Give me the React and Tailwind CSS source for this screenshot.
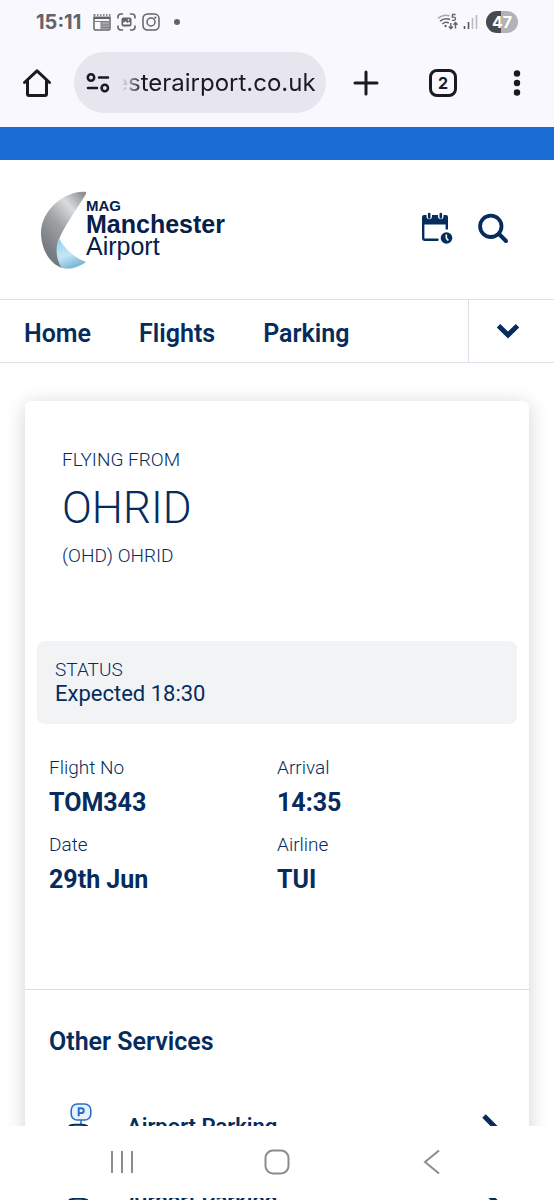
import { useLayoutEffect, useRef } from "react";

const NAV_LINKS = ["Home", "Flights", "Parking"];

const DETAILS = [
  { label: "Flight No", value: "TOM343" },
  { label: "Arrival", value: "14:35" },
  { label: "Date", value: "29th Jun" },
  { label: "Airline", value: "TUI" },
];

function NewsIcon() {
  return (
    <svg width="18" height="17" viewBox="0 0 18 17" fill="none" aria-hidden="true">
      <path d="M1 2.5V14.5Q1 16 2.5 16H15.5Q17 16 17 14.5V2.5" stroke="#636368" strokeWidth="1.5" />
      <path d="M0.5 1H2.5M4 1H5.5M7 1H8.5M10 1H11.5M13 1H14.500M16 1H17.500" stroke="#636368" strokeWidth="1.5" />
      <path d="M1 3.800H17" stroke="#636368" strokeWidth="2.500" />
      <path d="M8 8H16V15H8Z" fill="#a4a4a9" />
      <path d="M2 7.500H16M9 11H16M9 13.500H16M8 8V16" stroke="#7c7c82" strokeWidth="1" />
    </svg>
  );
}

function CaptureIcon() {
  return (
    <svg width="19" height="18" viewBox="0 0 19 18" fill="none" aria-hidden="true">
      <path
        d="M1 5V4Q1 1 4 1H5.500M13.500 1H15Q18 1 18 4V5M18 13V14Q18 17 15 17H13.500M5.500 17H4Q1 17 1 14V13"
        stroke="#636368"
        strokeWidth="1.600"
        strokeLinecap="round"
      />
      <rect x="4.500" y="4.500" width="10" height="9" rx="2" fill="#636368" />
      <path d="M6 11.500V10L8.500 8.300L10.500 10L12 8.800L13 9.500V11.500Z" fill="#f9f8fe" />
      <circle cx="11.500" cy="6.800" r="0.900" fill="#f9f8fe" />
    </svg>
  );
}

function CameraIcon() {
  return (
    <svg width="18" height="18" viewBox="0 0 18 18" fill="none" aria-hidden="true">
      <rect x="1" y="1" width="16" height="16" rx="4.500" stroke="#636368" strokeWidth="1.500" />
      <circle cx="9" cy="9" r="4" stroke="#636368" strokeWidth="1.500" />
      <circle cx="13.300" cy="4.700" r="1.100" fill="#636368" />
    </svg>
  );
}

function WifiIcon() {
  return (
    <svg width="22" height="18" viewBox="0 0 22 18" fill="none" aria-hidden="true">
      <path d="M1 5.500Q6 0.800 12.500 2.800" stroke="#a9a8ae" strokeWidth="1.500" />
      <path d="M3 8.300Q7.500 4.200 13 6.500" stroke="#636368" strokeWidth="1.500" />
      <path d="M5.300 11Q8.500 8.300 11.800 10" stroke="#636368" strokeWidth="1.500" />
      <circle cx="8.500" cy="13" r="1.200" fill="#636368" />
      <path d="M18.500 1.500H15.500L15.300 4.200Q18.500 3.600 18.500 5.700Q18.500 8 15 7.300" stroke="#636368" strokeWidth="1.300" />
      <path d="M13.800 10V15.500M11.800 13.500L13.800 15.700L15.800 13.500M18.500 15.500V10M16.500 11.800L18.500 9.600L20.500 11.800" stroke="#636368" strokeWidth="1.400" />
    </svg>
  );
}

function SignalIcon() {
  return (
    <svg width="15" height="16" viewBox="0 0 15 16" aria-hidden="true">
      <path d="M1.500 12V15M5.500 8V15" stroke="#57565b" strokeWidth="1.600" />
      <path d="M9.500 4V15M13.500 1V15" stroke="#bbbac1" strokeWidth="1.600" />
    </svg>
  );
}

function StatusBar() {
  return (
    <div className="flex h-11 items-center pr-9 pl-9 text-[#636368]">
      <span className="w-[49px] font-[Inter,sans-serif] text-xl leading-6 font-bold">15:11</span>
      <div className="ml-2 flex items-center gap-1.5">
        <NewsIcon />
        <CaptureIcon />
        <CameraIcon />
      </div>
      <span className="ml-3.5 size-1.5 rounded-full bg-[#636368]" />
      <div className="ml-auto flex items-center gap-1">
        <WifiIcon />
        <SignalIcon />
        <span className="ml-1 flex h-[22px] w-8 items-center justify-center rounded-full bg-linear-to-r from-[#4a494e] from-47% to-[#b3b2b8] to-47% font-[Inter,sans-serif] text-base leading-5 font-bold text-white">
          47
        </span>
      </div>
    </div>
  );
}

function BrowserBar() {
  const field = useRef(null);
  useLayoutEffect(() => {
    field.current.scrollLeft = field.current.scrollWidth;
  }, []);
  return (
    <div className="flex items-center pt-2 pr-[33px] pb-3.5 pl-[22px] text-[#1a1a22]">
      <button type="button" aria-label="Home page" className="shrink-0">
        <svg width="30" height="30" viewBox="0 0 30 30" fill="none" stroke="currentColor" strokeWidth="3" strokeLinecap="round" strokeLinejoin="round">
          <path d="M2.500 14.500L15 2.800L27.500 14.500" />
          <path d="M5.500 12.500V26Q5.500 27.500 7 27.500H23Q24.500 27.500 24.500 26V12.500" />
        </svg>
      </button>
      <div className="ml-[22px] flex h-[61px] min-w-0 flex-1 items-center gap-3 rounded-full bg-[#e7e5ee] pr-2.5 pl-3">
        <button type="button" aria-label="Site information" className="shrink-0">
          <svg width="24" height="20" viewBox="0 0 24 20" fill="none" stroke="currentColor" strokeWidth="2.500" strokeLinecap="round">
            <circle cx="5" cy="4.500" r="3.200" />
            <path d="M13 4.500H22M2 15H11" />
            <circle cx="18.800" cy="15" r="3.200" />
          </svg>
        </button>
        <input
          ref={field}
          type="text"
          readOnly
          aria-label="Address"
          defaultValue="esterairport.co.uk"
          className="min-w-0 flex-1 bg-transparent [mask-image:linear-gradient(to_right,transparent,black_20px)] font-[Inter,sans-serif] text-2xl leading-8 outline-none"
        />
      </div>
      <div className="ml-[27px] flex shrink-0 items-center">
        <button type="button" aria-label="New tab">
          <svg width="26" height="26" viewBox="0 0 26 26" fill="none" stroke="currentColor" strokeWidth="3" strokeLinecap="round">
            <path d="M13 2V24M2 13H24" />
          </svg>
        </button>
        <button
          type="button"
          aria-label="Open tabs"
          className="ml-[50px] flex size-7 items-center justify-center rounded-lg border-3 border-current font-[Inter,sans-serif] text-base leading-5 font-bold"
        >
          2
        </button>
        <button type="button" aria-label="More options" className="ml-14">
          <svg width="8" height="26" viewBox="0 0 8 26" fill="currentColor">
            <circle cx="4" cy="3.500" r="3.200" />
            <circle cx="4" cy="13" r="3.200" />
            <circle cx="4" cy="22.500" r="3.200" />
          </svg>
        </button>
      </div>
    </div>
  );
}

function Logo() {
  return (
    <a href="#home" className="flex items-start text-[#06204a]">
      <svg width="46" height="78" viewBox="0 0 46 78" aria-hidden="true">
        <defs>
          <linearGradient id="silver" x1="0.900" y1="0" x2="0.300" y2="0.900">
            <stop offset="0" stopColor="#8d9194" />
            <stop offset="0.280" stopColor="#d9dcde" />
            <stop offset="0.600" stopColor="#9da0a3" />
            <stop offset="1" stopColor="#74797d" />
          </linearGradient>
          <linearGradient id="sky" x1="0" y1="0" x2="0.400" y2="1">
            <stop offset="0" stopColor="#93cdea" />
            <stop offset="0.600" stopColor="#c4e6f7" />
            <stop offset="1" stopColor="#7fb9d8" />
          </linearGradient>
        </defs>
        <path d="M46 1C27 -1 0 18 1 44C2 61 11 73 22 77C16 66 16 55 20 46C26 33 36 19 46 3Z" fill="url(#silver)" />
        <path d="M19 47C15 57 16 69 22 77C31 79 39 76 46 71C33 66 24 57 19 47Z" fill="url(#sky)" />
      </svg>
      <span className="flex flex-col pt-[7px] font-['Liberation_Sans',Arial,sans-serif]">
        <span className="text-[15px] leading-4 font-bold">MAG</span>
        <span className="text-[25px] leading-[21px] font-bold">Manchester</span>
        <span className="text-[25px] leading-[23px]">Airport</span>
      </span>
    </a>
  );
}

function SiteHeader() {
  return (
    <header>
      <div className="h-[33px] bg-[#1a6dd5]" />
      <div className="flex items-start justify-between pt-[31px] pr-[45px] pb-[30px] pl-10">
        <Logo />
        <div className="mt-[21px] flex items-center gap-[25px]">
          <button type="button" aria-label="My bookings">
            <svg width="32" height="32" viewBox="0 0 32 32" fill="none">
              <path d="M2.200 9V26.500Q2.200 27.700 3.400 27.700H16.500" stroke="#062c5e" strokeWidth="2.400" strokeLinecap="round" />
              <path d="M25.800 10V17.500" stroke="#062c5e" strokeWidth="2.400" />
              <path d="M1 5Q1 3 3 3H5.500V5A2.800 2.800 0 0 0 11 5V3H17V5A2.800 2.800 0 0 0 22.500 5V3H25Q27 3 27 5V12.500H1Z" fill="#062c5e" />
              <path d="M8.200 2V5.500M19.800 2V5.500" stroke="#062c5e" strokeWidth="2.600" strokeLinecap="round" />
              <circle cx="25.500" cy="26" r="5.800" fill="#062c5e" />
              <path d="M25.300 22.500V26L27.300 28.500" stroke="#fff" strokeWidth="1.600" />
            </svg>
          </button>
          <button type="button" aria-label="Search">
            <svg width="31" height="31" viewBox="0 0 31 31" fill="none" stroke="#062c5e" strokeLinecap="round">
              <circle cx="12.800" cy="13.300" r="10.700" strokeWidth="3.800" />
              <path d="M21 21L28 28" strokeWidth="4" />
            </svg>
          </button>
        </div>
      </div>
      <nav className="flex h-16 border-y border-[#dcdfe6]">
        <div className="flex flex-1 items-center gap-12 pt-1.5 pl-6 text-[25px] leading-8 font-semibold">
          {NAV_LINKS.map((link) => (
            <a key={link} href={`#${link.toLowerCase()}`}>
              {link}
            </a>
          ))}
        </div>
        <button type="button" aria-label="More pages" className="flex w-[86px] items-center justify-center border-l border-[#dcdfe6] pr-2">
          <svg width="24" height="16" viewBox="0 0 24 16" fill="none">
            <path d="M2.500 2.800L12 12L21.500 2.800" stroke="#062c5e" strokeWidth="5" />
          </svg>
        </button>
      </nav>
    </header>
  );
}

function ParkingRow() {
  return (
    <a href="#airport-parking" className="flex items-start pr-7 pl-[43px]">
      <svg width="26" height="44" viewBox="0 0 26 44" fill="none" aria-hidden="true" className="shrink-0">
        <rect x="3.200" y="1" width="19.600" height="16" rx="6" fill="#e6f2fd" stroke="#2a6fca" strokeWidth="1.600" />
        <path d="M10.700 13.300V5.300H13.400A2.300 2.300 0 0 1 13.400 10H10.700" stroke="#2a6fca" strokeWidth="2" />
        <path d="M13 17V21" stroke="#2a6fca" strokeWidth="1.600" />
        <path d="M1 23Q4 21.800 7 21.800H13Q16 21.800 19 23L23 31M1 23V37H23V31" stroke="#062c5e" strokeWidth="2" />
      </svg>
      <span className="mt-2.5 ml-[33px] text-[22px] leading-7 font-semibold">Airport Parking</span>
      <svg width="20" height="34" viewBox="0 0 20 34" fill="none" aria-hidden="true" className="mt-2.5 ml-auto shrink-0">
        <path d="M3 3L17 17L3 31" stroke="#062c5e" strokeWidth="5" />
      </svg>
    </a>
  );
}

function FlightCard() {
  return (
    <section className="mx-[25px] mt-[38px] rounded-md bg-white shadow-[0_3px_20px_rgba(0,0,0,0.18)]">
      <div className="px-[37px] pt-[45px] font-light">
        <p className="text-[19px] leading-7">FLYING FROM</p>
        <h1 className="py-[7px] text-[44px] leading-[54px]">OHRID</h1>
        <p className="text-[19px] leading-7">(OHD) OHRID</p>
      </div>
      <div className="mx-3 mt-[71px] rounded-lg bg-[#f2f3f5] px-[18px] pt-[17px] pb-[18px]">
        <p className="text-[19px] leading-6 font-light">STATUS</p>
        <p className="text-[22px] leading-6">Expected 18:30</p>
      </div>
      <dl className="mt-[30px] grid grid-cols-2 gap-y-3 px-6 pb-[93px]">
        {DETAILS.map(({ label, value }) => (
          <div key={label}>
            <dt className="text-[19px] leading-7 font-light">{label}</dt>
            <dd className="pt-[5px] text-[25px] leading-8 font-bold">{value}</dd>
          </div>
        ))}
      </dl>
      <div className="border-t border-[#d9dce6] pt-9">
        <h2 className="px-6 pb-[45px] text-[25px] leading-8 font-semibold">Other Services</h2>
        <ParkingRow />
      </div>
    </section>
  );
}

function SystemNav() {
  return (
    <div className="flex h-[72px] shrink-0 items-center justify-center gap-[129px] bg-white text-[#8c8c8c]">
      <button type="button" aria-label="Recent apps">
        <svg width="26" height="26" viewBox="0 0 26 26" stroke="currentColor" strokeWidth="2">
          <path d="M3 2V24M13 2V24M23 2V24" />
        </svg>
      </button>
      <button type="button" aria-label="Home screen">
        <svg width="26" height="26" viewBox="0 0 26 26" fill="none" stroke="currentColor" strokeWidth="2">
          <rect x="1.500" y="1.500" width="23" height="23" rx="7.500" />
        </svg>
      </button>
      <button type="button" aria-label="Back">
        <svg width="26" height="26" viewBox="0 0 26 26" fill="none" stroke="currentColor" strokeWidth="2">
          <path d="M20 1.500L6 13L20 24.500" />
        </svg>
      </button>
    </div>
  );
}

export default function App() {
  return (
    <div className="flex h-screen flex-col overflow-hidden bg-white font-[Roboto,sans-serif] text-[#062c5e]">
      <div className="shrink-0 bg-[#f9f8fe]">
        <StatusBar />
        <BrowserBar />
      </div>
      <main className="min-h-0 flex-1 overflow-hidden">
        <SiteHeader />
        <FlightCard />
      </main>
      <SystemNav />
      <div className="h-0.5 shrink-0 overflow-hidden px-[25px]">
        <div className="-mt-[21px]">
          <ParkingRow />
        </div>
      </div>
    </div>
  );
}
